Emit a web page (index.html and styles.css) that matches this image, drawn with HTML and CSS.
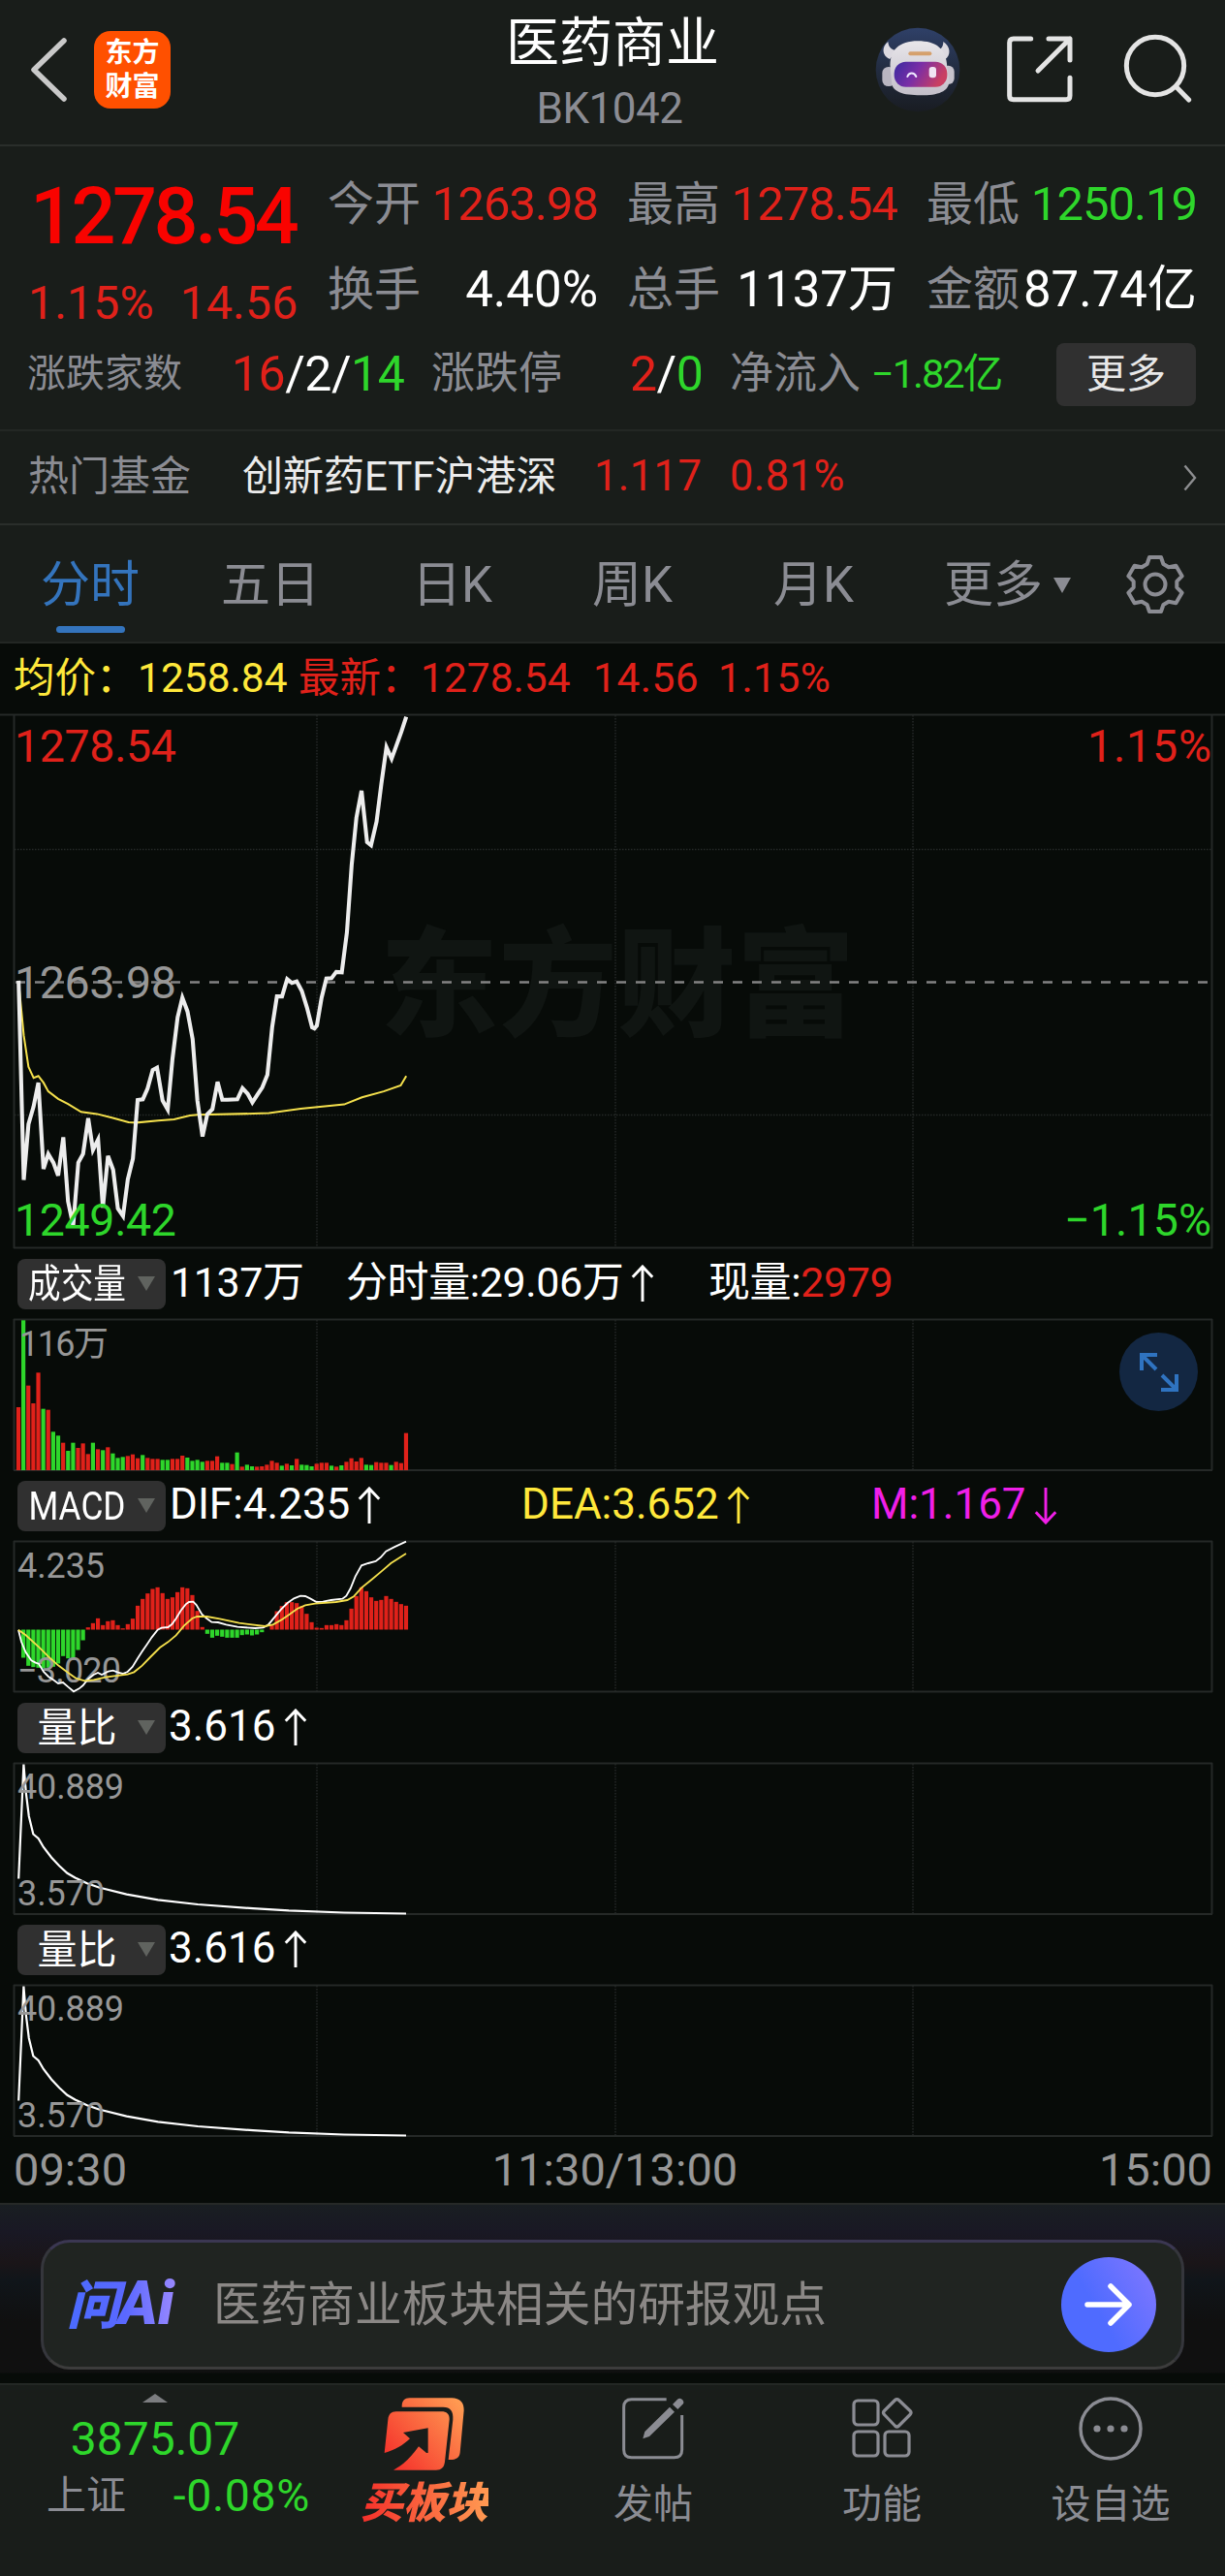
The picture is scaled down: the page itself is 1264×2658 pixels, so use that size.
FILE: index.html
```html
<!DOCTYPE html>
<html lang="zh-CN">
<head>
<meta charset="utf-8">
<title>医药商业 BK1042</title>
<link rel="stylesheet" href="styles.css">
</head>
<body>
<header class="topbar">
  <div class="topbar-left">
    <svg class="back" width="38" height="66" viewBox="0 0 38 66"><path d="M35 3 4 33 35 63" fill="none" stroke="#c9c9c9" stroke-width="5.5" stroke-linecap="round" stroke-linejoin="round"/></svg>
    <div class="brand"><span>东方</span><span>财富</span></div>
  </div>
  <div class="title"><h1>医药商业</h1><p>BK1042</p></div>
  <div class="topbar-right">
    <svg class="robot" width="88" height="88" viewBox="35 53 264 264">
      <defs>
        <linearGradient id="sky" x1="0" y1="0" x2="0" y2="1"><stop offset="0" stop-color="#2f4068"/><stop offset=".5" stop-color="#222c40"/><stop offset="1" stop-color="#191c22"/></linearGradient>
        <linearGradient id="visor" x1="0" y1="0" x2="1" y2=".3"><stop offset="0" stop-color="#3a2aa0"/><stop offset=".5" stop-color="#7a2ea6"/><stop offset="1" stop-color="#c93f62"/></linearGradient>
        <linearGradient id="shell" x1="0" y1="0" x2="0" y2="1"><stop offset="0" stop-color="#e8e6ea"/><stop offset="1" stop-color="#c3bfc9"/></linearGradient>
      </defs>
      <circle cx="167" cy="185" r="130" fill="url(#sky)"/>
      <path d="M75 98C56 112 54 140 80 152L104 126C88 124 76 116 75 98ZM246 98C268 112 272 140 250 154L226 126C240 122 246 112 246 98Z" fill="#dcd9e0"/>
      <rect x="57" y="176" width="40" height="60" rx="19" fill="#b9b6c2"/><rect x="242" y="172" width="38" height="58" rx="18" fill="#c6c2cc"/>
      <path d="M82 180C78 124 110 96 167 96S256 120 258 178L264 220C264 252 230 264 176 264S86 254 86 222Z" fill="url(#shell)"/>
      <rect x="138" y="129" width="72" height="12" rx="6" fill="#d5a06c"/>
      <rect x="94" y="160" width="164" height="78" rx="36" fill="url(#visor)"/>
      <path d="M135 206C140 192 156 192 162 206" fill="none" stroke="#efe9ff" stroke-width="6" stroke-linecap="round"/>
      <rect x="202" y="176" width="22" height="34" rx="9" fill="#f1e4f3"/>
    </svg>
    <svg class="share" width="70" height="70" viewBox="443 79 210 210" fill="none" stroke="#e4e4e4" stroke-width="15" stroke-linecap="round" stroke-linejoin="round"><path d="M520 91H466Q454 91 454 103V267Q454 279 466 279H629Q641 279 641 267V212M575 91H641V157M641 91 542 190"/></svg>
    <svg class="search" width="71" height="71" viewBox="807 75 213 213" fill="none" stroke="#e4e4e4" stroke-width="15" stroke-linecap="round"><circle cx="906" cy="174" r="89"/><path d="M972 240 1010 279"/></svg>
  </div>
</header>

<section class="quote">
  <div class="last">
    <div class="price">1278.54</div>
    <div class="change"><span>1.15%</span><span>14.56</span></div>
  </div>
  <dl class="stats">
    <div><dt>今开</dt><dd class="up">1263.98</dd></div>
    <div><dt>最高</dt><dd class="up">1278.54</dd></div>
    <div><dt>最低</dt><dd class="down">1250.19</dd></div>
    <div><dt>换手</dt><dd class="wide">4.40%</dd></div>
    <div><dt>总手</dt><dd class="wide">1137万</dd></div>
    <div><dt>金额</dt><dd class="wide">87.74亿</dd></div>
  </dl>
  <div class="breadth">
    <span class="lbl small">涨跌家数</span>
    <span class="val"><b class="up">16</b>/2/<b class="down">14</b></span>
    <span class="lbl">涨跌停</span>
    <span class="val"><b class="up">2</b>/<b class="down">0</b></span>
    <span class="lbl">净流入</span>
    <span class="flow down">−1.82亿</span>
    <button class="more">更多</button>
  </div>
</section>

<section class="fund">
  <span class="lbl">热门基金</span>
  <span class="fund-name">创新药ETF沪港深</span>
  <span class="up nav-value">1.117</span>
  <span class="up nav-pct">0.81%</span>
  <svg width="14" height="28" viewBox="0 0 14 28"><path d="M1.5 1.5 12 14 1.5 26.5" fill="none" stroke="#8d8e90" stroke-width="2.4"/></svg>
</section>

<nav class="tabs">
  <a class="active">分时</a><a>五日</a><a>日K</a><a>周K</a><a>月K</a><a class="tab-more">更多<i></i></a>
  <svg width="62" height="62" viewBox="-31 -31 62 62" fill="none" stroke="#8b8c93" stroke-width="4" stroke-linejoin="round"><path d="M-6-28H6L8.4-21 13.9-17.7 21.4-19.2 27.7-8.6 22.3-3.1V3.1L27.7 8.6 21.4 19.2 13.9 17.7 8.4 21 6 28H-6L-8.4 21-13.9 17.7-21.4 19.2-27.7 8.6-22.3 3.1V-3.1L-27.7-8.6-21.4-19.2-13.9-17.7-8.4-21Z"/><circle r="10.5"/></svg>
</nav>

<main class="charts">
  <div class="legend">
    <span class="avg">均价：</span><span class="avg">1258.84</span>
    <span>最新：</span><span>1278.54</span><span>14.56</span><span>1.15%</span>
  </div>
  <svg class="chart" width="1264" height="551" viewBox="0 737 1264 551">
    <text class="watermark" x="392" y="1059" textLength="490">东方财富</text>
    <path class="dots" d="M327 738V1287M635 738V1287M942 738V1287M15 876.5H1250M15 1150.5H1250"/>
    <path class="dash" d="M15 1013.5H1250"/>
    <path class="frame" d="M0 737.5H1264M14.5 737V1288M1250.5 737V1288M14 1287.5H1251"/>
    <text class="axis mid" x="15" y="1030" textLength="167">1263.98</text>
    <g transform="translate(0 660) scale(.40816)">
      <polyline class="mean" points="47,865 60,1000 72,1080 85,1108 97,1103 110,1120 122,1142 147,1161 172,1174 205,1194 245,1199 285,1209 325,1220 345,1221 400,1216 440,1213 480,1203 500,1201 600,1199 680,1197 760,1186 870,1175 915,1157 970,1142 1013,1127 1027,1103"/>
      <polyline class="trend" points="47,862 60,1366 72,1225 85,1180 97,1120 110,1338 122,1300 135,1322 147,1355 160,1258 172,1420 185,1482 198,1322 210,1300 223,1210 235,1290 248,1264 260,1436 273,1305 286,1340 298,1438 311,1457 323,1365 336,1312 348,1164 361,1162 373,1135 386,1088 397,1082 411,1165 424,1188 436,1060 449,955 461,905 474,940 487,1010 499,1165 512,1256 524,1200 537,1187 550,1118 562,1163 575,1163 600,1162 613,1134 626,1148 638,1170 651,1150 663,1132 676,1100 688,980 700,902 713,902 726,858 738,868 750,864 763,888 776,930 789,980 795,983 801,976 813,905 825,857 838,856 850,840 864,841 877,740 889,570 901,450 914,382 928,512 938,520 952,460 964,365 977,272 990,301 1002,268 1015,232 1027,195"/>
    </g>
    <text class="axis hi" x="15" y="786" textLength="167">1278.54</text>
    <text class="axis lo" x="15" y="1275" textLength="167">1249.42</text>
    <text class="axis hi" x="1122" y="786" textLength="128">1.15%</text>
    <text class="axis lo" x="1098" y="1275" textLength="152">−1.15%</text>
  </svg>

  <div class="indicator volume">
    <button class="pill"><span>成交量</span><i></i></button>
    <span>1137万</span>
    <span>分时量:29.06万<svg class="arr"><use href="#up"/></svg></span>
    <span>现量:<b class="up">2979</b></span>
  </div>
  <div class="plot">
    <svg class="chart" width="1264" height="156" viewBox="0 1361 1264 156">
      <path class="dots" d="M327 1362V1516M635 1362V1516M942 1362V1516"/>
      <path class="frame" d="M14.5 1361V1517M1250.5 1361V1517M14 1361.5H1251M14 1517H1251"/>
      <g id="volume-bars"></g>
      <text class="scale" x="20" y="1399" textLength="92">116万</text>
    </svg>
    <button class="expand"><svg width="44" height="44" viewBox="0 0 44 44" fill="none" stroke="#2f73c0" stroke-width="4"><path d="M4 20V4H20M4 4 19 19M40 24V40H24M40 40 25 25"/></svg></button>
  </div>

  <div class="indicator macd">
    <button class="pill"><span>MACD</span><i></i></button>
    <span>DIF:4.235<svg class="arr"><use href="#up"/></svg></span>
    <span class="dea">DEA:3.652<svg class="arr"><use href="#up"/></svg></span>
    <span class="bar">M:1.167<svg class="arr"><use href="#down"/></svg></span>
  </div>
  <svg class="chart" width="1264" height="156" viewBox="0 1590 1264 156">
    <path class="dots" d="M327 1591V1745M635 1591V1745M942 1591V1745"/>
    <path class="frame" d="M14.5 1590V1746M1250.5 1590V1746M14 1590.5H1251M14 1745.5H1251"/>
    <g id="macd-bars"></g>
    <text class="scale" x="18" y="1628" textLength="90">4.235</text>
    <text class="scale" x="18" y="1736" textLength="107">−3.020</text>
    <g transform="translate(0 1570) scale(.33333)">
      <polyline class="thin" points="57,335 66,372 80,405 97,430 110,437 120,440 135,465 150,480 165,490 180,501 195,498 211,512 228,526 245,517 257,507 272,488 290,474 303,468 315,474 335,464 350,461 365,467 380,471 395,465 410,450 425,425 440,402 455,380 470,358 488,335 500,329 520,327 532,318 545,300 560,275 575,256 585,249 598,248 608,258 625,287 640,300 655,311 675,312 700,319 735,326 790,330 815,328 830,320 850,296 870,272 890,252 910,238 930,230 945,231 960,238 980,249 1000,248 1025,243 1060,239 1072,230 1085,207 1100,170 1119,136 1140,129 1163,123 1178,111 1195,92 1220,79 1257,62"/>
      <polyline class="thin gold" points="57,335 80,352 120,388 150,418 180,445 210,467 235,485 262,493 290,490 330,481 395,473 415,466 440,446 465,420 495,390 520,373 545,352 570,322 595,300 610,294 640,294 680,301 740,314 820,324 845,319 870,305 895,288 920,270 945,259 975,254 1040,249 1075,243 1095,232 1119,205 1150,180 1180,155 1210,129 1257,99"/>
    </g>
  </svg>

  <div class="indicator ratio">
    <button class="pill"><span>量比</span><i></i></button>
    <span>3.616<svg class="arr"><use href="#up"/></svg></span>
  </div>
  <svg class="chart" width="1264" height="156" viewBox="0 0 1264 156"><use href="#ratio-plot"/></svg>
  <div class="indicator ratio">
    <button class="pill"><span>量比</span><i></i></button>
    <span>3.616<svg class="arr"><use href="#up"/></svg></span>
  </div>
  <svg class="chart" width="1264" height="156" viewBox="0 0 1264 156">
    <g id="ratio-plot">
      <path class="dots" d="M327 1V155M635 1V155M942 1V155"/>
      <path class="frame" d="M14.5 0V156M1250.5 0V156M14 .5H1251M14 156H1251"/>
      <polyline class="curve" points="19.2,119.5 24.4,1.5 26.9,31.5 29.8,55 34.3,73.5 39.6,78 44.9,87 53,97.5 61.2,106.3 69.4,113.8 77.5,118.5 89.8,124.2 102,128.5 130.6,135.6 163,141.3 204,146 261,150.2 298,152.4 355,154.5 419,155.5"/>
      <text class="scale" x="18" y="37" textLength="110">40.889</text>
      <text class="scale" x="18" y="146.5" textLength="90">3.570</text>
    </g>
  </svg>
  <div class="times"><span>09:30</span><span>11:30/13:00</span><span>15:00</span></div>
</main>

<section class="ask">
  <div class="ask-box">
    <span class="ask-logo"><b>问</b>Ai</span>
    <span class="ask-text">医药商业板块相关的研报观点</span>
    <button class="go"><svg width="50" height="44" viewBox="0 0 50 44" fill="none" stroke="#fff" stroke-width="5.5" stroke-linecap="round" stroke-linejoin="round"><path d="M3 22H46M27 3 46 22 27 41"/></svg></button>
  </div>
</section>

<footer class="dock">
  <div class="index">
    <i></i>
    <strong>3875.07</strong>
    <p><span>上证</span><span class="down">-0.08%</span></p>
  </div>
  <a class="buy">
    <svg width="84" height="78" viewBox="114 68 252 232">
      <defs><linearGradient id="fire" gradientUnits="userSpaceOnUse" x1="130" y1="280" x2="350" y2="90"><stop offset="0" stop-color="#f52f2a"/><stop offset="1" stop-color="#ff9a52"/></linearGradient></defs>
      <g fill="url(#fire)"><path d="M170 99C170 79 178 71 194 71H324C350 71 363 86 362 110L350 240C348 256 338 263 314 262L328 138C330 112 320 99 298 99Z"/>
      <path d="M152 113H292C310 113 318 122 317 138L303 268C301 286 292 294 276 294H144C180 274 200 252 222 221L246 241H251V164L174 178L195 197C172 218 150 232 116 241L127 138C129 121 137 113 152 113Z"/></g>
    </svg>
    <span>买板块</span>
  </a>
  <a>
    <svg width="66" height="66" viewBox="844 69 198 198" fill="none" stroke="#8b8c93" stroke-width="9"><path d="M984 77H876Q852 77 852 101V233Q852 257 876 257H1008Q1032 257 1032 233V126"/><path d="M911 199 917 177 994 101 1009 116 931 192ZM1003 93 1018 77Q1027 70 1034 79T1033 94L1019 108Z" fill="#8b8c93" stroke="none"/></svg>
    <span>发帖</span>
  </a>
  <a>
    <svg width="66" height="66" viewBox="0 0 66 66" fill="none" stroke="#8b8c93" stroke-width="3.2"><rect x="4" y="4" width="25" height="25" rx="4"/><rect x="4" y="36" width="25" height="25" rx="4"/><rect x="36" y="36" width="25" height="25" rx="4"/><path d="M46.500 3.500Q48.500 1.500 50.500 3.500L62 14.500Q64 16.500 62 18.500L50.500 30Q48.500 32 46.500 30L35.500 18.500Q33.500 16.500 35.500 14.500Z"/></svg>
    <span>功能</span>
  </a>
  <a>
    <svg width="66" height="66" viewBox="0 0 66 66"><circle cx="33" cy="33" r="31" fill="none" stroke="#8b8c93" stroke-width="3.4"/><g fill="#8b8c93"><circle cx="19" cy="33" r="3.6"/><circle cx="33" cy="33" r="3.6"/><circle cx="47" cy="33" r="3.6"/></g></svg>
    <span>设自选</span>
  </a>
</footer>

<svg class="symbols">
  <symbol id="up" viewBox="0 0 24 40"><path d="M12 39V2M1.500 13 12 2 22.500 13" fill="none" stroke="currentColor" stroke-width="3"/></symbol>
  <symbol id="down" viewBox="0 0 24 40"><path d="M12 1V38M1.500 27 12 38 22.500 27" fill="none" stroke="currentColor" stroke-width="3"/></symbol>
</svg>
<script src="script.js"></script>
</body>
</html>
```
FILE: styles.css
```css
* { box-sizing: border-box; }
body, h1, p, dl, dt, dd { margin: 0; }
body {
  width: 1264px;
  background: #191d1a;
  color: #fff;
  font-family: Roboto, "Noto Sans CJK SC", sans-serif;
  white-space: nowrap;
}
button { border: 0; padding: 0; font: inherit; color: inherit; }
b { font-weight: inherit; }
svg { flex: none; }
.up { color: #e0211a; }
.down { color: #2ed62b; }
.lbl { color: #8b8c93; }
.symbols { display: none; }

.topbar {
  height: 151px;
  display: grid;
  grid-template-columns: 1fr auto 1fr;
  border-bottom: 2px solid #2a2e2b;
}
.topbar-left { display: flex; align-items: flex-start; padding: 32px 0 0 31px; }
.back { margin-top: 7px; }
.brand {
  width: 79px; height: 80px;
  margin-left: 28px;
  padding-top: 5px;
  border-radius: 17px;
  background: #ff5000;
  display: flex; flex-direction: column; align-items: center;
  font-weight: 700; font-size: 28px; line-height: 35px;
}
.title { text-align: center; }
.title h1 { font-size: 55px; font-weight: 400; line-height: 60px; margin-top: 14px; }
.title p { font-size: 44px; line-height: 60px; margin: 8px 6px 0 0; letter-spacing: -.5px; color: #8b8c93; }
.topbar-right { display: flex; justify-content: flex-end; padding-right: 34px; }
.robot { margin-top: 28px; }
.share { margin: 36px 51px 0 47px; }
.search { margin-top: 35px; }

.quote {
  height: 294px;
  padding-top: 15px;
  display: grid;
  grid-template: 176px 88px / 338px 1fr;
  border-bottom: 2px solid #232724;
}
.last { padding: 8px 0 0 31px; color: #e0211a; }
.price { font-size: 81px; font-weight: 500; line-height: 99px; letter-spacing: -3.500px; color: #f90300; }
.change { display: flex; gap: 27px; margin-left: -2px; font-size: 48px; line-height: 79px; letter-spacing: .2px; }
.stats { display: grid; grid-template-columns: 282px 282px 282px; column-gap: 27px; grid-auto-rows: 88px; }
.stats div { display: flex; justify-content: space-between; line-height: 90px; padding-right: 3px; }
.stats dt { font-size: 48px; color: #8b8c93; }
.stats dd { font-size: 49px; letter-spacing: -1px; }
.stats .wide { font-size: 51px; letter-spacing: 0; }
.breadth {
  grid-column: 1 / 3;
  display: grid;
  grid-template-columns: 211px 206px 205px 103px 146px 191px 144px;
  align-items: center;
  padding-left: 28px;
  line-height: 88px;
}
.breadth .lbl { font-size: 45px; }
.breadth .small { font-size: 40px; }
.val { font-size: 50px; letter-spacing: -.5px; }
.flow { font-size: 41.500px; letter-spacing: -2px; }
.more { height: 65px; border-radius: 8px; background: #303030; color: #e8e8e8; font-size: 41px; line-height: 62px; }

.fund {
  height: 97px;
  padding: 0 29px;
  display: grid;
  grid-template-columns: 221px 363px 140px 1fr 14px;
  align-items: center;
  border-bottom: 2px solid #2a2e2b;
  font-size: 42px;
  line-height: 93px;
}
.fund span { height: 95px; }
.fund .nav-value, .fund .nav-pct { font-size: 43.500px; letter-spacing: .4px; }
.fund-name { color: #ececec; }

.tabs {
  height: 122px;
  padding-left: 42px;
  display: grid;
  grid-template-columns: 186px 197px 186px 187px 176px 187px 62px;
  border-bottom: 2px solid #232724;
  font-size: 51px;
  line-height: 124px;
  color: #8b8c93;
}
.tabs .active { position: relative; color: #3474bd; }
.tabs .active::after {
  content: ""; position: absolute; left: 16px; top: 104px;
  width: 71px; height: 7px; border-radius: 4px; background: #3474bd;
}
.tabs svg { margin-top: 30px; }
.tab-more { display: flex; align-items: center; gap: 11px; }
.tab-more i { border: 9px solid transparent; border-top: 16px solid #8b8c93; border-bottom: 0; }

.charts { background: #070b08; height: 1611px; border-bottom: 2px solid #262927; }
.legend {
  height: 73px;
  padding-left: 14px;
  display: grid;
  grid-template-columns: 128px 166px 126px 178px 129px 130px;
  font-size: 42.500px;
  line-height: 71px;
  color: #e0211a;
}
.legend span:nth-child(n+5) { letter-spacing: .5px; }
.legend .avg { color: #ffe83b; }
.chart { display: block; overflow: visible; }
.chart text { font-size: 46.500px; }
.chart .scale { font-size: 36px; fill: #979797; }
.chart .watermark { font-size: 122px; font-weight: 900; fill: #101512; }
.hi { fill: #e0211a; }
.lo { fill: #2ed62b; }
.mid { fill: #979797; }
.frame { fill: none; stroke: #252927; stroke-width: 2; }
.dots { fill: none; stroke: #252927; stroke-width: 1.500; stroke-dasharray: 1.500 1.500; }
.dash { stroke: #838383; stroke-width: 2.500; stroke-dasharray: 10 10; stroke-dashoffset: -1; }
polyline { fill: none; stroke-linejoin: miter; }
.trend { stroke: #ededed; stroke-width: 10; }
.mean { stroke: #f4e04c; stroke-width: 5; }
.thin { stroke: #fff; stroke-width: 5.500; }
.thin.gold { stroke: #f4e04c; }
.curve { stroke: #fff; stroke-width: 2.200; }

.indicator { height: 73px; padding-left: 18px; display: grid; align-items: center; font-size: 44px; line-height: 71px; }
.indicator > span { height: 73px; }
.volume { grid-template-columns: 158px 181px 374px 1fr; font-size: 43px; }
.volume > span { letter-spacing: -.4px; }
.macd { grid-template-columns: 157px 363px 361px 1fr; }
.ratio { grid-template-columns: 156px 1fr; }
.pill {
  width: 153px; height: 52px;
  display: flex; align-items: center;
  border-radius: 8px;
  background: #303030;
}
.pill span { width: 125px; margin-left: -1px; font-size: 41px; line-height: 50px; letter-spacing: 0; }
.macd .pill span { transform: scaleX(.86); }
.volume .pill span { transform: scaleX(.82); }
.pill i { border: 9px solid transparent; border-top: 15px solid #60635f; border-bottom: 0; }
.arr { width: 24px; height: 39px; margin-left: 8px; vertical-align: -6px; }
.dea { color: #ffe83b; }
.bar { color: #f01fe8; }
.plot { position: relative; }
.expand {
  position: absolute; left: 1155px; top: 14px;
  width: 81px; height: 81px; border-radius: 50%;
  background: #132742;
  display: flex; align-items: center; justify-content: center;
}
.times {
  height: 70px; padding: 0 13px 0 14px;
  display: flex; justify-content: space-between; align-items: center;
  font-size: 47px; line-height: 72px; color: #979797;
}
.times span:nth-child(2) { margin-left: 4px; }

.ask {
  height: 184px;
  padding: 36px 42px 0;
  background: linear-gradient(#191e22 0, #191824 28px, #1a1518 60px, #10151a 78px, #101010 120px, #101010 173px, #070b08 174px);
}
.ask-box {
  width: 1180px; height: 134px;
  display: flex; align-items: center;
  padding: 0 26px 0 24px;
  border-radius: 30px;
  border: 3px solid #3c3c3c;
  border-top-color: #3b3752; border-left-color: #35363c; border-right-color: #35363c;
  background: #202421;
}
.ask-logo {
  width: 151px;
  font-size: 62px; line-height: 70px; font-weight: 900; font-style: italic;
  background: linear-gradient(90deg, #4a6bff, #5a68ff 40%, #a08cff 118px);
  -webkit-background-clip: text; background-clip: text; color: transparent;
}
.ask-logo b { font-size: 54px; letter-spacing: -1px; }
.ask-text { flex: 1; font-size: 48.700px; line-height: 70px; padding-top: 2px; color: #8b8886; }
.go {
  width: 98px; height: 98px; border-radius: 50%;
  background: linear-gradient(60deg, #4f6bff 40%, #8378ff);
  display: flex; align-items: center; justify-content: center;
}

.dock {
  height: 199px;
  display: grid;
  grid-template-columns: 320px 236px 236px 236px 236px;
  border-top: 2px solid #232724;
}
.dock a { display: flex; flex-direction: column; align-items: center; padding-top: 12px; color: #8b8c93; font-size: 41px; line-height: 60px; }
.dock a span { margin-top: 15px; }
.dock .buy span {
  margin-top: 2px;
  font-size: 44px; font-weight: 900; font-style: italic;
  background: linear-gradient(90deg, #f52f2a, #ff9a52);
  -webkit-background-clip: text; background-clip: text; color: transparent;
}
.index { display: flex; flex-direction: column; align-items: center; }
.index i { margin-top: 9px; border: 13px solid transparent; border-bottom: 9px solid #7c7d80; border-top: 0; }
.index strong { margin-top: 13px; font-size: 48px; font-weight: 400; line-height: 50px; color: #2ed62b; }
.index p { width: 320px; padding-left: 48px; margin-top: 6px; display: flex; justify-content: space-between; font-size: 41px; line-height: 54px; color: #8b8c93; }
.index p .down { font-size: 46.500px; letter-spacing: .6px; color: #2ed62b; }
```
FILE: script.js
```js
const STEP = 5.128;
const RED = '#e0211a';
const GREEN = '#2ed62b';

function drawBars(id, base, bars) {
  const group = document.getElementById(id);
  bars.forEach(([height, color], i) => {
    if (!height) return;
    const rect = document.createElementNS('http://www.w3.org/2000/svg', 'rect');
    rect.setAttribute('x', (19 + i * STEP - 2.1).toFixed(2));
    rect.setAttribute('y', height > 0 ? base - height : base);
    rect.setAttribute('width', 4.2);
    rect.setAttribute('height', Math.abs(height));
    rect.setAttribute('fill', color);
    group.appendChild(rect);
  });
}

// Per-minute volume, in thirds of a pixel; the colour of each bar follows.
const volume = [195, 464, 262, 207, 302, 190, 187, 119, 107, 85, 60, 85, 69, 83, 50, 85, 65, 62, 71, 52,
  38, 41, 44, 49, 37, 47, 38, 35, 35, 32, 32, 35, 35, 45, 39, 29, 32, 26, 29, 29,
  43, 23, 23, 19, 55, 11, 17, 12, 11, 12, 17, 29, 23, 14, 20, 15, 35, 17, 16, 12,
  20, 23, 23, 14, 11, 15, 26, 37, 27, 38, 17, 16, 25, 23, 23, 16, 26, 22, 115];
const side = 'RGRRRGRGGRGGRRRGRGRGGGRRRGRRRGGRRRGGGGRRRGGRGRGGRRRRRGRGRGGGRRRGRGRRRRGGRRRGRRR';
drawBars('volume-bars', 1517, volume.map((v, i) => [v / 3, side[i] === 'R' ? RED : GREEN]));

const macd = [0, -87, -112, -116, -118, -120, -118, -115, -105, -82, -89, -92, -63, -33, 7, 20, 35, 14, 26, 29,
  14, 4, 17, 34, 74, 95, 112, 126, 131, 113, 95, 100, 116, 131, 128, 107, 58, 8, -13, -25,
  -19, -22, -25, -25, -25, -17, -15, -18, -15, -8, 0, 13, 57, 73, 85, 85, 82, 73, 49, 23,
  6, 5, 14, 14, 17, 14, 29, 65, 104, 131, 119, 100, 89, 92, 104, 95, 86, 79, 74];
drawBars('macd-bars', 1681.5, macd.map(v => [v / 3, v > 0 ? RED : GREEN]));
```
